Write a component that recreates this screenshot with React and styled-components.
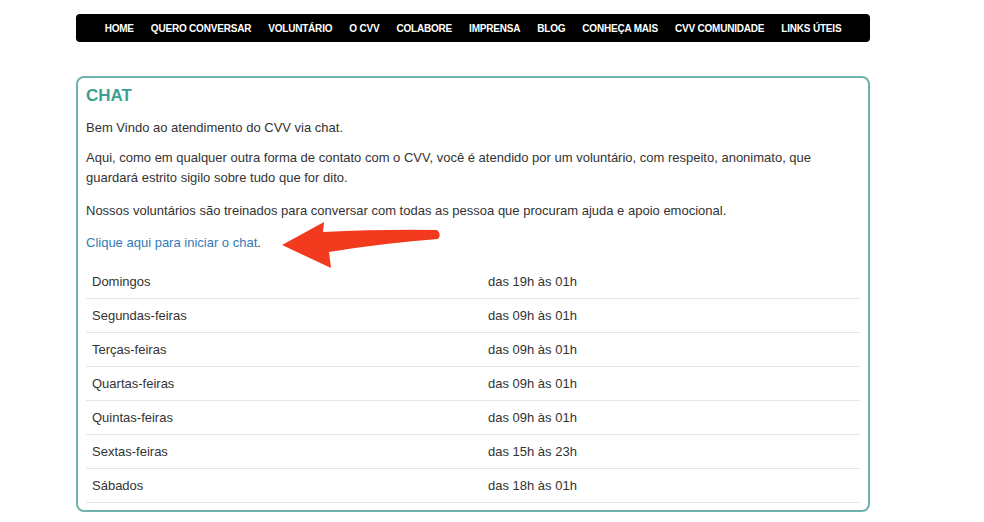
import React from "react";
import styled, { createGlobalStyle } from "styled-components";

const GlobalStyle = createGlobalStyle`
  body {
    margin: 0;
    background: #ffffff;
    font-family: "Liberation Sans", Arial, sans-serif;
  }
`;

const Page = styled.div`
  padding: 14px 0 0 76px;
  width: 794px;
`;

const NavBar = styled.nav`
  height: 28px;
  background: #000;
  border-radius: 4px;
  display: flex;
  align-items: center;
  justify-content: center;
  gap: 17px;
`;

const NavLink = styled.a`
  color: #fff;
  font-size: 10px;
  font-weight: bold;
  letter-spacing: -0.2px;
  text-decoration: none;
  white-space: nowrap;
`;

const Card = styled.section`
  position: relative;
  margin-top: 34px;
  border: 2px solid #6db3ab;
  border-radius: 8px;
  padding: 8px 8px 7px 8px;
`;

const Title = styled.h3`
  margin: 0 0 12px 0;
  font-size: 17px;
  line-height: 20px;
  font-weight: bold;
  color: #3d9f90;
`;

const Text = styled.p`
  margin: 0 0 ${p => p.$gap || 12}px 0;
  font-size: 13px;
  line-height: 20px;
  color: #333;
`;

const Link = styled.a`
  color: #337ab7;
  text-decoration: none;
`;

const Table = styled.div`
  display: flex;
  flex-direction: column;
`;

const Row = styled.div`
  display: grid;
  grid-template-columns: 396px 1fr;
  padding: 7px 6px 6px 6px;
  border-bottom: 1px solid #e6e6e6;
  font-size: 13px;
  line-height: 20px;
  color: #333;
`;

const Arrow = styled.svg`
  position: absolute;
  left: 196px;
  top: 140px;
  width: 172px;
  height: 56px;
  overflow: visible;
`;

const menu = [
  "HOME",
  "QUERO CONVERSAR",
  "VOLUNTÁRIO",
  "O CVV",
  "COLABORE",
  "IMPRENSA",
  "BLOG",
  "CONHEÇA MAIS",
  "CVV COMUNIDADE",
  "LINKS ÚTEIS",
];

const schedule = [
  ["Domingos", "das 19h às 01h"],
  ["Segundas-feiras", "das 09h às 01h"],
  ["Terças-feiras", "das 09h às 01h"],
  ["Quartas-feiras", "das 09h às 01h"],
  ["Quintas-feiras", "das 09h às 01h"],
  ["Sextas-feiras", "das 15h às 23h"],
  ["Sábados", "das 18h às 01h"],
];

export default function App() {
  return (
    <>
      <GlobalStyle />
      <Page>
        <NavBar>
          {menu.map(item => (
            <NavLink key={item} href="#">
              {item}
            </NavLink>
          ))}
        </NavBar>
        <Card>
          <Title>CHAT</Title>
          <Text $gap={10}>Bem Vindo ao atendimento do CVV via chat.</Text>
          <Text $gap={13}>
            Aqui, como em qualquer outra forma de contato com o CVV, você é atendido por um voluntário, com respeito, anonimato, que
            guardará estrito sigilo sobre tudo que for dito.
          </Text>
          <Text>Nossos voluntários são treinados para conversar com todas as pessoa que procuram ajuda e apoio emocional.</Text>
          <Text>
            <Link href="#">Clique aqui para iniciar o chat</Link>.
          </Text>
          <Table>
            {schedule.map(([day, hours]) => (
              <Row key={day}>
                <span>{day}</span>
                <span>{hours}</span>
              </Row>
            ))}
          </Table>
          <Arrow viewBox="0 0 172 56">
            <path
              d="M8 27 L50 4 L49 14 Q110 11 163 12 Q168 16 164 21 Q110 25 55 34 L57 50 Z"
              fill="#f23a1e"
            />
          </Arrow>
        </Card>
      </Page>
    </>
  );
}
